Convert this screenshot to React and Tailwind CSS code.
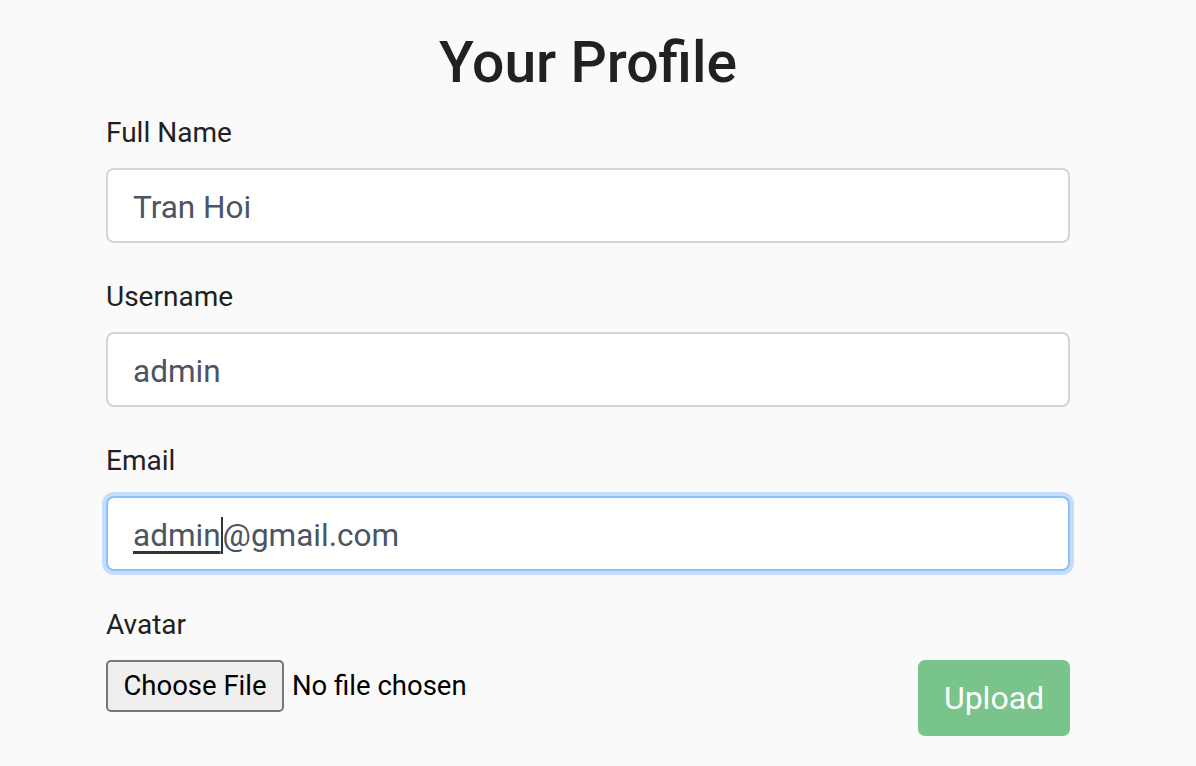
import React from 'react'

const Field = ({ label, value, className }) => (
  <div className='flex flex-col'>
    <label className='text-[28px] leading-[39px] text-[#212121] mb-[16px]'>{label}</label>
    <input
      readOnly
      value={value}
      className={'h-[75px] w-full rounded-[8px] border-2 border-[#d1d5db] bg-white px-[25px] pt-[3px] text-[31.5px] text-[#4b5563] outline-none ' + (className || '')}
    />
  </div>
)

const App = () => {
  return (
    <div className='min-h-screen bg-[#fafafa]' style={{ fontFamily: 'Roboto, "Noto Sans", sans-serif' }}>
      <div className='w-[1176px] px-[106px] pt-[29px]'>
        <h1 className='text-center text-[57px] leading-[67px] font-medium text-[#212121] mb-[17px]'>Your Profile</h1>
        <div className='flex flex-col gap-[34px]'>
          <Field label='Full Name' value='Tran Hoi' />
          <Field label='Username' value='admin' />
          <div className='flex flex-col'>
            <label className='text-[28px] leading-[39px] text-[#212121] mb-[16px]'>Email</label>
            <div className='flex h-[75px] w-full items-center rounded-[8px] border-2 border-[#8fc1f9] bg-white px-[25px] pt-[4px] text-[31.5px] text-[#4b5563] shadow-[0_0_0_4px_#c4ddfa]'>
              <span className='underline decoration-[3px] decoration-[#333333] underline-offset-[5px]'>admin</span>
              <span className='h-[37px] w-[2px] bg-[#333333]'></span>
              <span>@gmail.com</span>
            </div>
          </div>
          <div className='flex flex-col'>
            <label className='text-[28px] leading-[39px] text-[#212121] mb-[16px]'>Avatar</label>
            <div className='flex items-start justify-between'>
              <div className='flex items-center'>
                <button className='h-[52px] w-[178px] rounded-[5px] border-2 border-[#767676] bg-[#efefef] text-[27.5px] text-black'>Choose File</button>
                <span className='ml-[8px] text-[27.5px] text-black'>No file chosen</span>
              </div>
              <button className='h-[76px] w-[152px] rounded-[7px] bg-[#79c48b] text-[32px] text-white'>Upload</button>
            </div>
          </div>
        </div>
      </div>
    </div>
  )
}

export default App
